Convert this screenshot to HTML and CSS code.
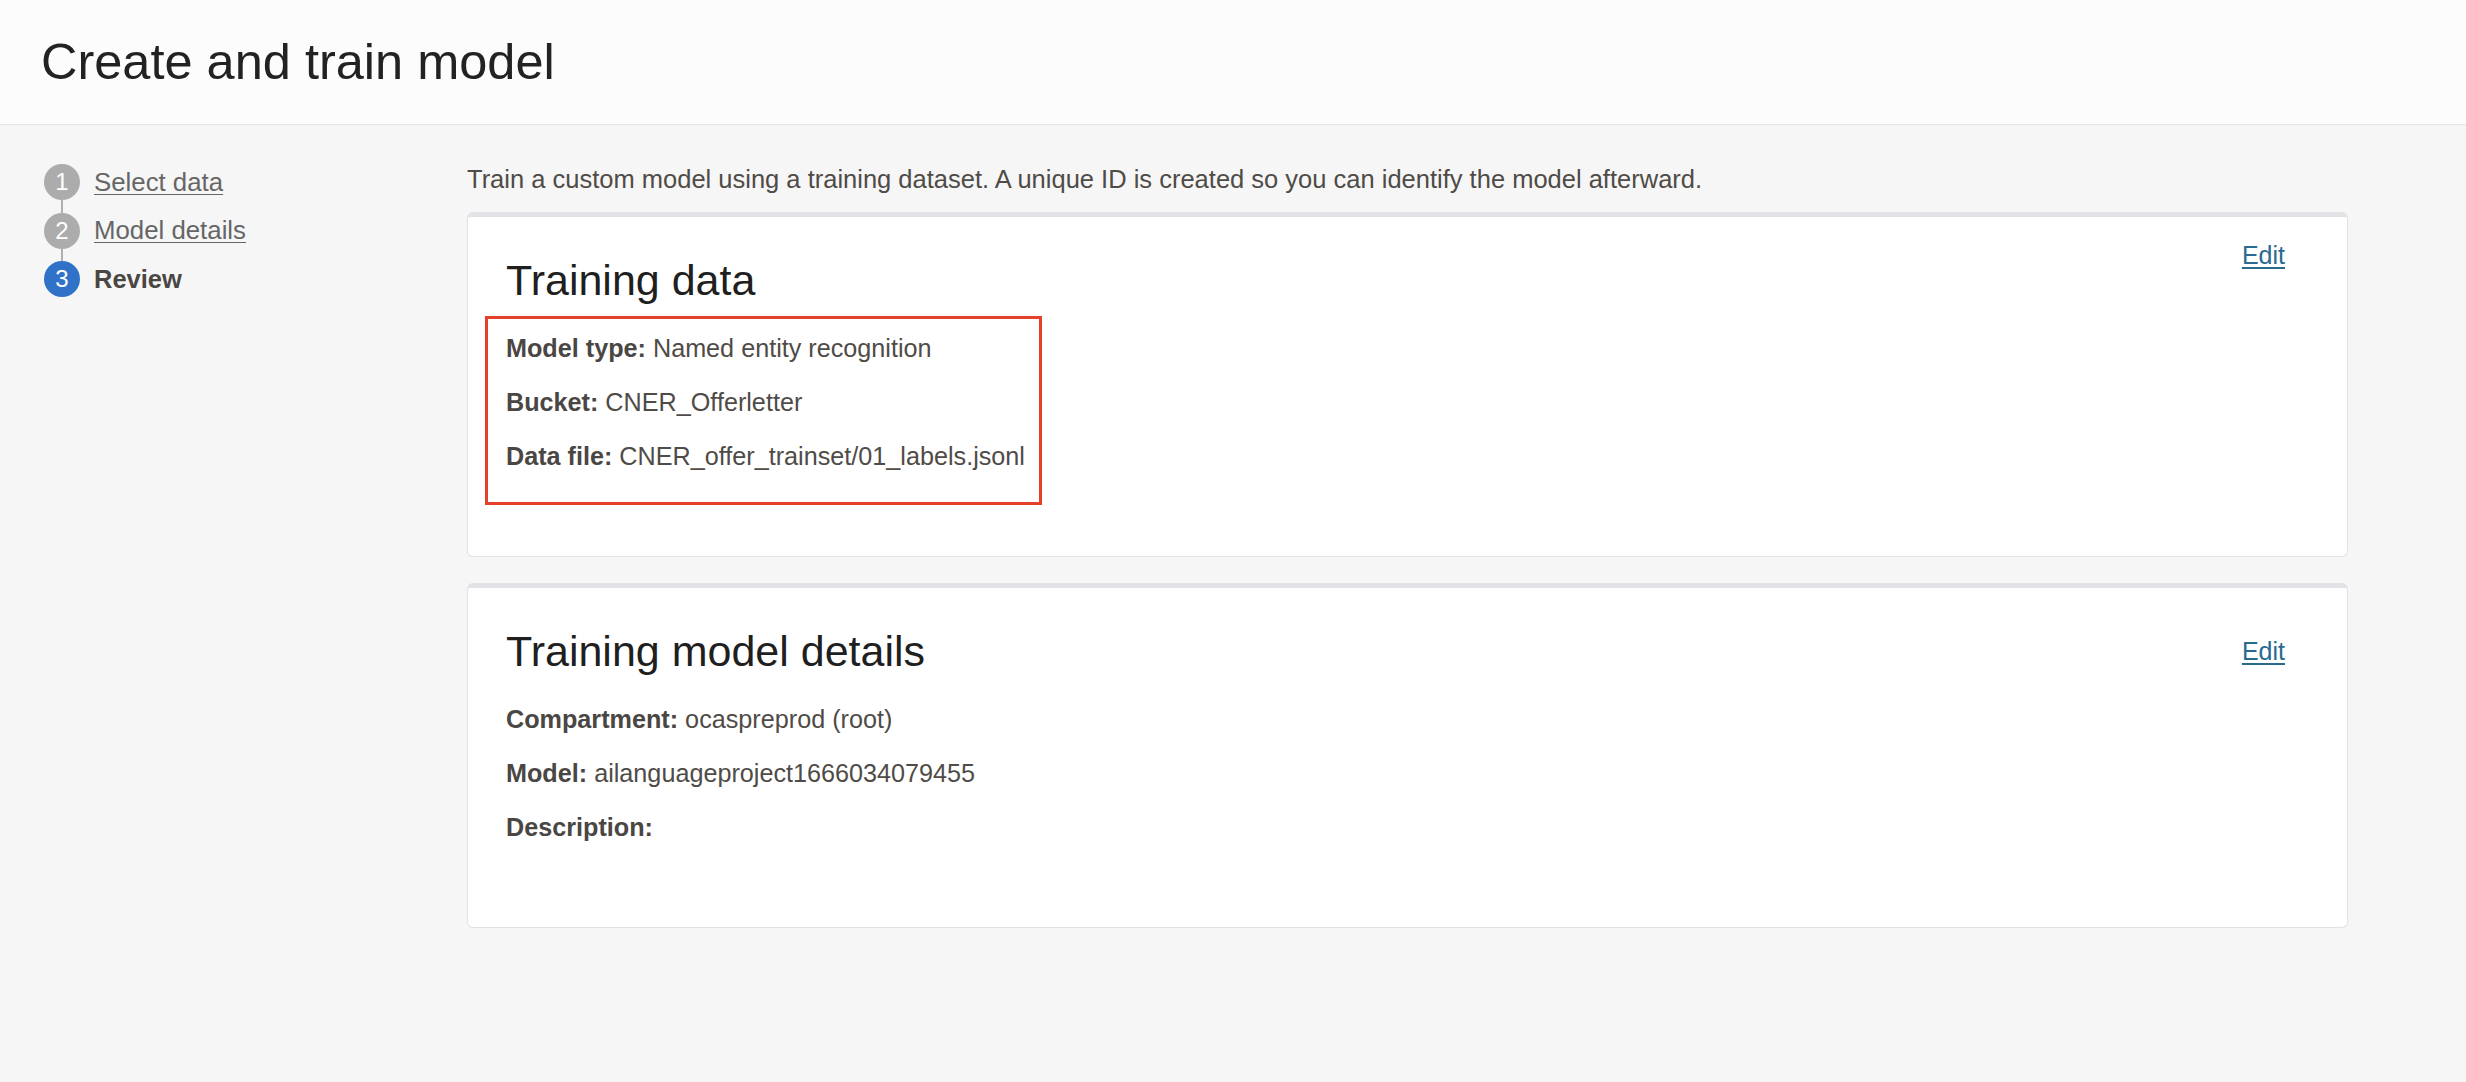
FILE: index.html
```html
<!DOCTYPE html>
<html lang="en">
<head>
<meta charset="utf-8">
<title>Create and train model</title>
<link rel="stylesheet" href="styles.css">
</head>
<body>
<header class="header">
  <h1 class="title">Create and train model</h1>
</header>
<div class="layout">
  <nav class="nav">
    <div class="step">
      <span class="step-num">1</span>
      <a class="step-link" href="#">Select data</a>
    </div>
    <div class="connector"></div>
    <div class="step">
      <span class="step-num">2</span>
      <a class="step-link" href="#">Model details</a>
    </div>
    <div class="connector"></div>
    <div class="step">
      <span class="step-num step-num--active">3</span>
      <span class="step-current">Review</span>
    </div>
  </nav>
  <main class="main">
    <p class="intro">Train a custom model using a training dataset. A unique ID is created so you can identify the model afterward.</p>

    <section class="card">
      <div class="card-head card-head--top">
        <h2 class="card-title">Training data</h2>
        <a class="edit edit--raised" href="#">Edit</a>
      </div>
      <div class="highlight">
        <p class="row"><b class="label">Model type:</b> Named entity recognition</p>
        <p class="row"><b class="label">Bucket:</b> CNER_Offerletter</p>
        <p class="row"><b class="label">Data file:</b> CNER_offer_trainset/01_labels.jsonl</p>
      </div>
    </section>

    <section class="card">
      <div class="card-head">
        <h2 class="card-title">Training model details</h2>
        <a class="edit" href="#">Edit</a>
      </div>
      <div class="rows">
        <p class="row"><b class="label">Compartment:</b> ocaspreprod (root)</p>
        <p class="row"><b class="label">Model:</b> ailanguageproject1666034079455</p>
        <p class="row"><b class="label">Description:</b></p>
      </div>
    </section>
  </main>
</div>
</body>
</html>
```
FILE: styles.css
```css
html, body {
  margin: 0;
  padding: 0;
}

body {
  background: #f6f6f6;
  font-family: "Liberation Sans", Arial, Helvetica, sans-serif;
  color: #4f4b47;
  min-height: 1082px;
}

.header {
  background: #fcfcfc;
  border-bottom: 1px solid #e6e6e6;
  height: 124px;
  display: flex;
  align-items: center;
  padding-left: 41px;
}

.title {
  margin: 0;
  font-size: 50.5px;
  font-weight: 400;
  line-height: 60px;
  color: #222222;
}

.layout {
  display: flex;
  padding-top: 39px;
}

.nav {
  width: 467px;
  flex: none;
  box-sizing: border-box;
  padding-left: 44px;
}

.step {
  display: flex;
  align-items: center;
  gap: 14px;
  height: 36px;
}

.step-num {
  width: 36px;
  height: 36px;
  border-radius: 50%;
  background: #acacac;
  color: #ffffff;
  font-size: 24px;
  line-height: 36px;
  text-align: center;
  flex: none;
}

.step-num--active {
  background: #2f72c8;
}

.step-link {
  font-size: 25.8px;
  color: #666666;
  text-decoration: underline;
  text-underline-offset: 3px;
  text-decoration-thickness: 1px;
}

.step-current {
  font-size: 25.5px;
  font-weight: 700;
  color: #4a4643;
}

.connector {
  width: 2px;
  height: 12.5px;
  margin-left: 17px;
  background: #b0b0b0;
}

.main {
  flex: 1;
  margin-right: 118px;
}

.intro {
  margin: 0 0 18px;
  font-size: 25.5px;
  line-height: 30px;
  color: #4f4b47;
}

.card {
  background: #ffffff;
  border: 1px solid #e2e2e2;
  border-top: 5px solid #e3e3e7;
  border-radius: 6px;
  padding: 38px 38px 85px;
  margin-bottom: 26px;
}

.card-head {
  display: flex;
  justify-content: space-between;
  align-items: center;
  margin-bottom: 28px;
}

.card-title {
  margin: 0;
  font-size: 43px;
  font-weight: 400;
  line-height: 50px;
  color: #1f1f1f;
}

.edit {
  font-size: 25px;
  line-height: 30px;
  color: #2b6a8f;
  text-decoration: underline;
  text-underline-offset: 3px;
  margin-right: 24px;
}

.card-head--top {
  align-items: flex-start;
}

.edit--raised {
  margin-top: -15px;
}

.row {
  margin: 0;
  font-size: 25.2px;
  line-height: 30px;
  color: #4f4b47;
}

.row + .row {
  margin-top: 24px;
}

.label {
  font-weight: 700;
  color: #4a4643;
}

.highlight {
  width: 557px;
  box-sizing: border-box;
  border: 3px solid #e5402b;
  margin: -17px 0 -34px -21px;
  padding: 14px 0 31px 18px;
}
```
